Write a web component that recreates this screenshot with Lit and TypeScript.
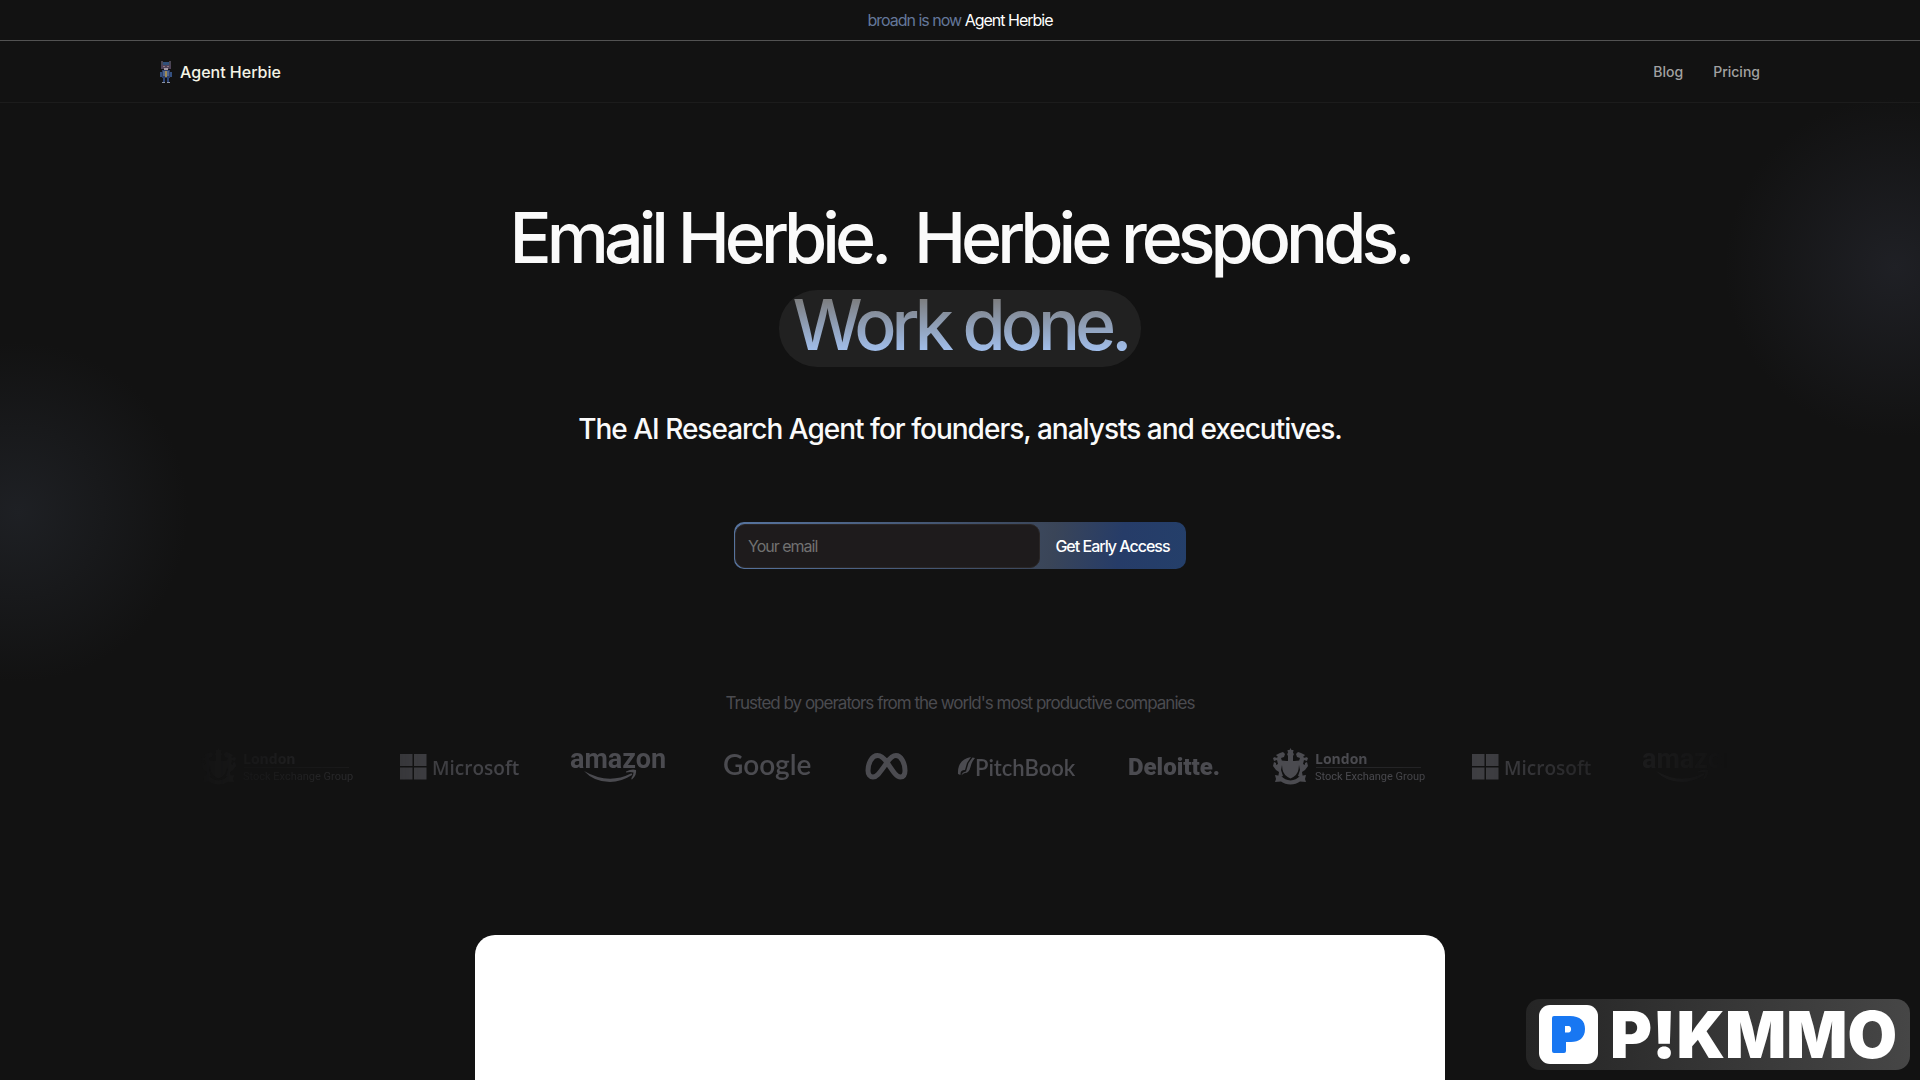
import { LitElement, html, css } from "lit";
import { customElement } from "lit/decorators.js";

const herbie = html`
  <svg class="herbie" viewBox="0 0 12 24" aria-hidden="true" shape-rendering="crispEdges">
    <path fill="#4a4652" d="M1 1h2v1h6V1h2v4H1z" />
    <path fill="#31507a" d="M3 2h6v3H3z" />
    <path fill="#4d4258" d="M1 5h10v4H1z" />
    <path fill="#8b7480" d="M3 6h2v1H3zM7 6h2v1H7z" />
    <path fill="#a59aa5" d="M4 8h4v2H4z" />
    <path fill="#2c3d68" d="M2 10h8v8H2z" />
    <path fill="#34507f" d="M0 12h2v5H0zM10 12h2v5h-2z" />
    <path fill="#4f6590" d="M3 11h2v5H3zM7 11h2v5H7z" />
    <path fill="#a08a55" d="M5 11h2v6H5z" />
    <path fill="#2c4478" d="M3 18h2v4H3zM7 18h2v4H7z" />
    <path fill="#8d95a5" d="M2 22h3v1H2zM7 22h3v1H7z" />
  </svg>
`;

const londonLogo = () => html`
  <svg class="logo" width="150" height="40" viewBox="0 0 150 40" role="img" aria-label="London Stock Exchange Group">
    <path d="M18.500 2l1 2 2 0-.500 3 1 1-1 2v5h1.500l5-.500-1 9q-1 6-8 9-7-3-8-9l-1-9 5 .500H16v-5l-1-2 1-1-.500-3 2 0z" />
    <path d="M8 7l3-1 2 2-1 3-3 1 1 3 3 2-3 2-1 5 2 6-5 2 1-6-3-2-3-4 1-4 2 1v2l2-1-1-4-3 1-1-3 2-1 1 1 2-1-2-2z" />
    <path d="M29 7l-3-1-2 2 1 3 3 1-1 3-3 2 3 2 1 5-2 6 5 2-1-6 3-2 3-4-1-4-2 1v2l-2-1 1-4 3 1 1-3-2-1-1 1-2-1 2-2z" />
    <path d="M3 29l6 1q4 4 9.500 4.500 5.500-.500 9.500-4.500l6-1-1 4 1 3-6-.500q-4 3-9.500 3t-9.500-3L3 36l1-3z" />
    <text x="43" y="18" font-family="Open Sans, sans-serif" font-weight="700" font-size="14">London</text>
    <path d="M44 21h105v1H44z" opacity=".35" />
    <text x="43" y="34" font-family="Roboto, sans-serif" font-weight="400" font-size="11">Stock Exchange Group</text>
  </svg>
`;

const microsoftLogo = () => html`
  <svg class="logo" width="120" height="40" viewBox="0 0 120 40" role="img" aria-label="Microsoft">
    <path d="M0 8h12.500v12H0zM14 8h12.500v12H14zM0 21.500h12.500v12H0zM14 21.500h12.500v12H14z" />
    <text x="32" y="29" font-family="Open Sans, sans-serif" font-weight="600" font-size="19">Microsoft</text>
  </svg>
`;

const amazonLogo = () => html`
  <svg class="logo" width="99" height="40" viewBox="0 0 99 40" role="img" aria-label="amazon">
    <text x="0" y="22" font-family="Roboto, sans-serif" font-weight="700" font-size="27">amazon</text>
    <path d="M14 25q24 14 47 2.500 2-.500 1 1.500-11 7-22 7-16 0-26-11z" />
    <path d="M56 25.500q6-3 10-1.500 1 5-4 9.500-1 0-.500-1.500 2-3 2-5.500-3-1-7.500 0z" />
  </svg>
`;

const googleLogo = () => html`
  <svg class="logo" width="96" height="40" viewBox="0 0 96 40" role="img" aria-label="Google">
    <text x="4" y="29" font-family="Lato, sans-serif" font-weight="600" font-size="28">Google</text>
  </svg>
`;

const metaLogo = () => html`
  <svg class="logo" width="43" height="40" viewBox="0 0 43 40" role="img" aria-label="Meta">
    <path
      class="stroke"
      d="M22 16.500C18.500 11.500 16 9.500 12.500 9.500 7 9.500 3 17 3 24.500 3 28.500 5 31 8 31c4 0 6.500-4 14-14.500 3-4.500 5.500-7 9-7 5 0 9 7.500 9 15 0 4-1.500 6.500-4.500 6.500-4 0-6.500-4-13.500-14.500z"
    />
  </svg>
`;

const pitchbookLogo = () => html`
  <svg class="logo" width="120" height="40" viewBox="0 0 120 40" role="img" aria-label="PitchBook">
    <path d="M0 28Q-1 14 13 11L9 17 7 24Q2 24 2.500 29z" />
    <path d="M3.500 29.500Q4 26 8 25.500L10.500 17 14.500 11.500 17 12Q13.500 16 12.500 21 11 27 7 27 4.500 27.500 3.500 29.500z" />
    <text x="17" y="30" font-family="Lato, sans-serif" font-weight="600" font-size="22">PitchBook</text>
  </svg>
`;

const deloitteLogo = () => html`
  <svg class="logo" width="94" height="40" viewBox="0 0 94 40" role="img" aria-label="Deloitte.">
    <text x="0" y="29" font-family="Roboto, sans-serif" font-weight="900" font-size="24">Deloitte.</text>
  </svg>
`;

const companies = [
  londonLogo,
  microsoftLogo,
  amazonLogo,
  googleLogo,
  metaLogo,
  pitchbookLogo,
  deloitteLogo,
  londonLogo,
  microsoftLogo,
  amazonLogo,
];

@customElement("app-root")
export class AppRoot extends LitElement {
  static styles = css`
    :host {
      display: flex;
      flex-direction: column;
      height: 100vh;
      overflow: hidden;
      color: #fafafa;
      font-family: Inter, "Liberation Sans", sans-serif;
      font-size: 16px;
      line-height: 24px;
      background:
        radial-gradient(circle 170px at calc(100% - 25px) 267px, #1f2025, transparent),
        radial-gradient(circle 170px at 18px 512px, #1e2024, transparent),
        #121212;
    }
    * {
      box-sizing: border-box;
    }
    a {
      color: inherit;
      text-decoration: none;
    }
    .banner,
    .hero,
    .trust {
      letter-spacing: -1px;
      text-align: center;
    }
    .banner {
      padding: 8px 0;
      border-bottom: 1px solid #525252;
      color: #64779a;
    }
    .banner strong {
      color: #fff;
      font-weight: 400;
    }
    .header {
      border-bottom: 1px solid #1c1c1c;
    }
    .bar {
      display: flex;
      align-items: center;
      justify-content: space-between;
      max-width: 1600px;
      height: 61px;
      margin: 0 auto;
    }
    .brand {
      display: flex;
      align-items: center;
      gap: 8px;
      color: #f5f5e6;
      font-weight: 500;
    }
    .herbie {
      width: 12px;
      height: 24px;
    }
    .links {
      display: flex;
      gap: 30px;
      color: #a1a1a1;
      font-size: 14px;
      font-weight: 500;
    }
    .hero {
      display: flex;
      flex-direction: column;
      align-items: center;
      padding-top: 91px;
    }
    h1 {
      margin: 0;
      font-size: 70px;
      line-height: 87px;
      font-weight: 500;
      letter-spacing: -5px;
      white-space: pre-wrap;
    }
    .pill {
      display: inline-block;
      padding: 0 14px 8px;
      border-radius: 38px;
      background: #212121;
      line-height: 69px;
    }
    .shade {
      display: block;
      color: transparent;
      background: linear-gradient(#7b7b7b 10%, #a2c0ee 90%);
      background-clip: text;
      -webkit-background-clip: text;
    }
    .lead {
      margin: 43px 0 0;
      font-size: 28px;
      line-height: 36px;
      font-weight: 500;
    }
    .signup {
      display: flex;
      width: 452px;
      max-width: 100%;
      height: 47px;
      margin-top: 75px;
      padding: 2px 1px 1px;
      border-radius: 10px;
      background: linear-gradient(100deg, #57749f, #3a4558 70%, #263c68 85%, #243f6a);
    }
    .signup input {
      flex: 1;
      min-width: 0;
      padding: 0 12px;
      border: 1px solid #2a2626;
      border-radius: 10px;
      background: #1e1b1c;
      color: #fafafa;
      font: inherit;
      letter-spacing: inherit;
      outline: none;
    }
    .signup input::placeholder {
      color: #717171;
    }
    .signup button {
      width: 145px;
      padding: 0;
      border: 0;
      background: none;
      color: #fff;
      font: inherit;
      font-weight: 500;
      letter-spacing: inherit;
      white-space: nowrap;
    }
    .trust {
      margin-top: 122px;
    }
    .trust p {
      margin: 0;
      color: #4b4b50;
      font-size: 17px;
    }
    .marquee {
      display: flex;
      gap: 50px;
      max-width: 1536px;
      margin: 31px auto 0;
      padding-left: 8px;
      overflow: hidden;
      letter-spacing: normal;
      mask-image: linear-gradient(
        90deg,
        transparent,
        rgba(0, 0, 0, 0.15) 5%,
        rgba(0, 0, 0, 0.4) 10%,
        rgba(0, 0, 0, 0.75) 15%,
        #000 25%,
        #000 75%,
        rgba(0, 0, 0, 0.75) 85%,
        rgba(0, 0, 0, 0.4) 90%,
        rgba(0, 0, 0, 0.15) 95%,
        transparent
      );
    }
    .logo {
      display: block;
      flex: none;
      overflow: visible;
      fill: #4b4b50;
    }
    .stroke {
      fill: none;
      stroke: #4b4b50;
      stroke-width: 5;
      stroke-linejoin: round;
    }
    .preview {
      flex: 1;
      width: 970px;
      max-width: 100%;
      margin: 149px auto 0;
      border-radius: 20px 20px 0 0;
      background: #fff;
    }
    .badge {
      position: fixed;
      right: 10px;
      bottom: 10px;
      display: flex;
      align-items: center;
      gap: 12px;
      height: 71px;
      padding: 0 13px;
      border-radius: 14px;
      background: linear-gradient(90deg, #252525, #464646);
      color: #fff;
      font-size: 64px;
      font-weight: 900;
      line-height: 71px;
    }
    .tile {
      width: 59px;
      height: 59px;
    }
  `;

  render() {
    return html`
      <div class="banner">broadn is now <strong>Agent Herbie</strong></div>
      <header class="header">
        <div class="bar">
          <a class="brand" href="#">${herbie}<span>Agent Herbie</span></a>
          <nav class="links">
            <a href="#blog">Blog</a>
            <a href="#pricing">Pricing</a>
          </nav>
        </div>
      </header>
      <section class="hero">
        <h1>Email Herbie.  Herbie responds.<br /><span class="pill"><span class="shade">Work done.</span></span></h1>
        <p class="lead">The AI Research Agent for founders, analysts and executives.</p>
        <form class="signup">
          <input type="email" placeholder="Your email" aria-label="Your email" />
          <button type="button">Get Early Access</button>
        </form>
      </section>
      <section class="trust">
        <p>Trusted by operators from the world's most productive companies</p>
        <div class="marquee">${companies.map((logo) => logo())}</div>
      </section>
      <div class="preview"></div>
      <a class="badge" href="#pikmmo">
        <svg class="tile" viewBox="0 0 59 59" aria-hidden="true">
          <rect width="59" height="59" rx="11" fill="#fff" />
          <path
            fill="#1877f2"
            fill-rule="evenodd"
            d="M15 11h16c10 0 15 5 15 13 0 9-6 13-14 13h-5v9q0 2-2 2H15q-2 0-2-2V13q0-2 2-2zM26 21v6.500h3.500c3.500 0 3.500-6.500 0-6.500z"
          />
        </svg>
        <span>P!KMMO</span>
      </a>
    `;
  }
}
